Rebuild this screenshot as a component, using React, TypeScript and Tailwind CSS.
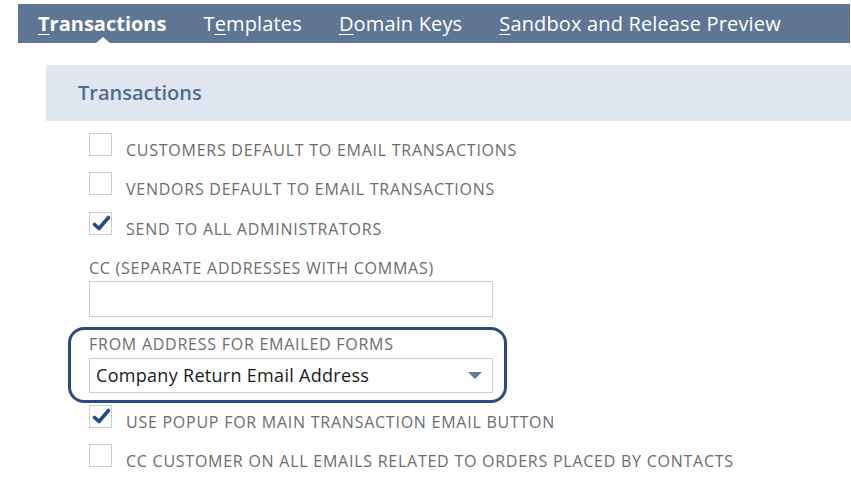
import React from "react";

const TABS = [
  { pre: "", key: "T", rest: "ransactions", active: true },
  { pre: "T", key: "e", rest: "mplates", active: false },
  { pre: "", key: "D", rest: "omain Keys", active: false },
  { pre: "", key: "S", rest: "andbox and Release Preview", active: false },
];

function Checkbox({ checked }: { checked?: boolean }) {
  return (
    <div className="w-[23px] h-[23px] shrink-0 border border-[#cdcdcd] bg-white relative">
      {checked && (
        <svg viewBox="0 0 23 23" className="absolute inset-0 w-[23px] h-[23px] overflow-visible">
          <path d="M4.5 11.5 L9 15.5 L18.5 4.5" fill="none" stroke="#1f4b8a" strokeWidth="3.6" strokeLinecap="round" strokeLinejoin="round" />
        </svg>
      )}
    </div>
  );
}

function CheckRow({ label, checked, className = "" }: { label: string; checked?: boolean; className?: string }) {
  return (
    <div className={`flex items-start h-[23px] ${className}`}>
      <Checkbox checked={checked} />
      <span className="ml-[14px] mt-[7px] text-[16px] tracking-[0.75px] leading-[20px] text-[#6d6d6d] whitespace-nowrap">{label}</span>
    </div>
  );
}

export default function App() {
  return (
    <div className="w-[851px] h-[483px] overflow-hidden bg-white" style={{ fontFamily: '"Open Sans", "Liberation Sans", sans-serif' }}>
      {/* TAB BAR */}
      <div className="mt-[4px] ml-[18px] mr-[1px] h-[39px] bg-[#5f7594] flex items-center pl-[20px] gap-[37px] relative">
        {TABS.map((t, i) => (
          <span key={i} className={`text-white text-[20px] leading-[26px] whitespace-nowrap ${t.active ? "font-bold" : "tracking-[0.15px]"}`}>
            {t.pre}
            <span className="underline underline-offset-[3px] decoration-1">{t.key}</span>
            {t.rest}
          </span>
        ))}
        <div className="absolute bottom-0 left-[78px] w-0 h-0 border-l-[7px] border-r-[7px] border-b-[6px] border-l-transparent border-r-transparent border-b-white" />
      </div>

      {/* SECTION HEADER */}
      <div className="mt-[22px] ml-[46px] h-[56px] bg-[#dfe6f0] flex items-center pl-[32px]">
        <span className="text-[20px] text-[#4f6b8e] font-semibold">Transactions</span>
      </div>

      {/* FIELDS */}
      <div className="pl-[89px]">
        <CheckRow className="mt-[12px]" label="CUSTOMERS DEFAULT TO EMAIL TRANSACTIONS" />
        <CheckRow className="mt-[16px]" label="VENDORS DEFAULT TO EMAIL TRANSACTIONS" />
        <CheckRow className="mt-[17px]" label="SEND TO ALL ADMINISTRATORS" checked />

        <div className="mt-[23px] text-[16px] tracking-[0.75px] leading-[20px] text-[#6d6d6d] whitespace-nowrap">CC (SEPARATE ADDRESSES WITH COMMAS)</div>
        <div className="mt-[3px] w-[404px] h-[36px] border border-[#cdcdcd] bg-white" />

        <div className="relative mt-[17px]">
          <div className="text-[16px] tracking-[0.75px] leading-[20px] text-[#6d6d6d] whitespace-nowrap">FROM ADDRESS FOR EMAILED FORMS</div>
          <div className="mt-[4px] w-[404px] h-[35px] border border-[#cdcdcd] bg-white flex items-center pl-[6px] pr-[8px]">
            <span className="flex-1 text-[18px] tracking-[0.3px] text-[#1a1a1a] whitespace-nowrap">Company Return Email Address</span>
            <div className="w-0 h-0 border-l-[7px] border-r-[7px] border-t-[7px] border-l-transparent border-r-transparent border-t-[#617896] mr-[2px]" />
          </div>
          {/* highlight */}
          <div className="absolute left-[-21px] top-[-7px] w-[439px] h-[76px] border-[3px] border-[#2c4a82] rounded-[16px] pointer-events-none" />
        </div>

        <CheckRow className="mt-[12px]" label="USE POPUP FOR MAIN TRANSACTION EMAIL BUTTON" checked />
        <CheckRow className="mt-[16px]" label="CC CUSTOMER ON ALL EMAILS RELATED TO ORDERS PLACED BY CONTACTS" />
      </div>
    </div>
  );
}
